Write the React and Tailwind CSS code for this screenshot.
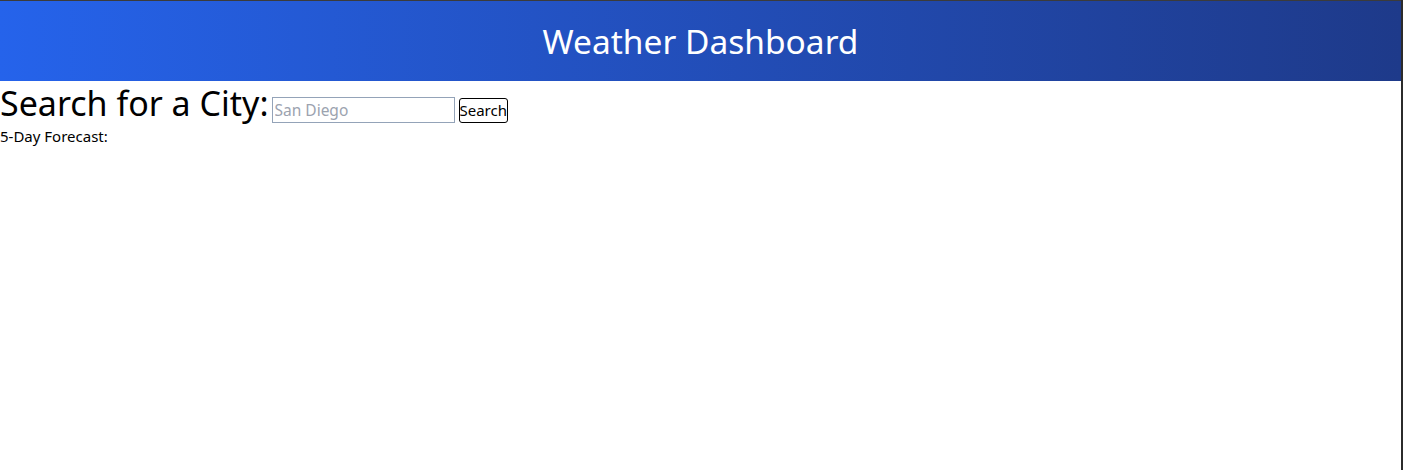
import React from 'react'

export default function App() {
  return (
    <div className="flex h-[470px] bg-white" style={{ fontFamily: '"Noto Sans", "Open Sans", sans-serif' }}>
      <div className="flex-1 flex flex-col border-t border-[#3b3b3b]">
        {/* Header */}
        <header className="h-20 bg-gradient-to-r from-[#2563eb] to-[#1e3a8a] flex items-center justify-center">
          <h1 className="text-[33.5px] text-white">Weather Dashboard</h1>
        </header>

        {/* Search */}
        <div className="flex items-baseline">
          <h2 className="text-[34px] leading-[45px] text-black">Search for a City:</h2>
          <input
            type="text"
            placeholder="San Diego"
            className="ml-[3px] w-[183px] h-[26px] border border-[#94a3b8] px-[2px] text-[15.5px] placeholder:text-[#9ca3af]"
          />
          <button className="ml-[4px] h-[25px] px-0 border border-black rounded-[3px] bg-white text-[15px] text-black">
            Search
          </button>
        </div>
        <div className="mt-[1px] text-[15px] leading-[18px] text-black">5-Day Forecast:</div>
      </div>
      <div className="w-[2px] bg-[#2b2b2b]" />
    </div>
  )
}
